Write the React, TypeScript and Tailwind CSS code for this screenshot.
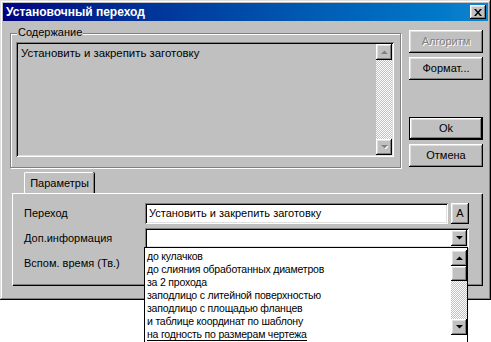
const raised =
  'shadow-[inset_-1px_-1px_#000,inset_1px_1px_#fff,inset_-2px_-2px_#808080,inset_2px_2px_#dfdfdf]'
const sunken =
  'shadow-[inset_1px_1px_#808080,inset_-1px_-1px_#fff,inset_2px_2px_#000,inset_-2px_-2px_#dfdfdf]'
const dither =
  'bg-[repeating-conic-gradient(#c0c0c0_0%_25%,#fff_0%_50%)] bg-[length:2px_2px]'

function Arrow({ dir, disabled }: { dir: 'up' | 'down'; disabled?: boolean }) {
  const pts = dir === 'up' ? '0,4 7,4 3.5,0.5' : '0,0 7,0 3.5,3.5'
  return (
    <svg width="7" height="4" viewBox="0 0 7 4" className="block">
      {disabled && (
        <polygon points={pts} fill="#fff" transform="translate(1,1)" />
      )}
      <polygon points={pts} fill={disabled ? '#808080' : '#000'} />
    </svg>
  )
}

function ScrollButton({ dir, disabled }: { dir: 'up' | 'down'; disabled?: boolean }) {
  return (
    <div className={`flex h-[16px] w-[16px] shrink-0 items-center justify-center bg-[#c0c0c0] ${raised}`}>
      <Arrow dir={dir} disabled={disabled} />
    </div>
  )
}

function Button({
  label,
  disabled,
  primary,
}: {
  label: string
  disabled?: boolean
  primary?: boolean
}) {
  return (
    <div className={clsxLite('h-[23px] w-[74px]', primary && 'border border-black')}>
      <div
        className={`flex h-full w-full items-center justify-center bg-[#c0c0c0] ${raised} ${
          disabled ? 'text-[#808080] [text-shadow:1px_1px_#fff]' : 'text-black'
        }`}
      >
        {label}
      </div>
    </div>
  )
}

function clsxLite(...parts: (string | false | undefined)[]) {
  return parts.filter(Boolean).join(' ')
}

const options = [
  'до кулачков',
  'до слияния обработанных диаметров',
  'за 2 прохода',
  'заподлицо с литейной поверхностью',
  'заподлицо с площадью фланцев',
  'и таблице координат по шаблону',
  'на годность по размерам чертежа',
]

export default function App() {
  return (
    <div className="relative h-[342px] w-[491px] overflow-hidden bg-white font-['Liberation_Sans',Arial,sans-serif] text-[11px] leading-none text-black">
      <div className="h-[300px] w-[491px] bg-[#c0c0c0] p-[3px] shadow-[inset_-1px_-1px_#000,inset_1px_1px_#dfdfdf,inset_-2px_-2px_#808080,inset_2px_2px_#fff]">
        {/* title bar */}
        <div className="flex h-[18px] items-center justify-between bg-gradient-to-r from-[#000080] to-[#1084d0] pl-[3px] pr-[2px]">
          <span className="text-[12px] font-bold text-white">Установочный переход</span>
          <div className={`flex h-[14px] w-[16px] items-center justify-center bg-[#c0c0c0] ${raised}`}>
            <svg width="8" height="7" viewBox="0 0 8 7">
              <path d="M0 0h2l2 2.5L6 0h2L5 3.5 8 7H6L4 4.5 2 7H0l3-3.5z" fill="#000" />
            </svg>
          </div>
        </div>

        {/* upper area */}
        <div className="flex">
          <div className="ml-[7px] mt-[12px] relative h-[135px] w-[391px] border border-[#808080] shadow-[inset_1px_1px_#fff,1px_1px_#fff]">
            <span className="absolute left-[6px] top-[-7px] bg-[#c0c0c0] px-[1px]">Содержание</span>
            <div className={`ml-[5px] mt-[8px] flex h-[115px] w-[378px] bg-[#c0c0c0] p-[2px] ${sunken}`}>
              <div className="flex-1 pl-[3px] pt-[4px] text-[11.4px]">Установить и закрепить заготовку</div>
              <div className="flex w-[16px] flex-col">
                <ScrollButton dir="up" disabled />
                <div className={`flex-1 ${dither}`} />
                <ScrollButton dir="down" disabled />
              </div>
            </div>
          </div>

          <div className="ml-[8px] mt-[9px] flex flex-col">
            <Button label="Алгоритм" disabled />
            <div className="mt-[4px]">
              <Button label="Формат..." />
            </div>
            <div className="mt-[37px]">
              <Button label="Ok" primary />
            </div>
            <div className="mt-[4px]">
              <Button label="Отмена" />
            </div>
          </div>
        </div>

        {/* tabs */}
        <div className="ml-[9px] mt-[4px] w-[470px]">
          <div className="ml-[12px] flex h-[21px] w-[70px] items-center justify-center rounded-t-[2px] border-l border-t border-white bg-[#c0c0c0] shadow-[inset_-1px_0_#808080,1px_0_#000]">
            Параметры
          </div>
          <div className="h-[92px] border-l border-t border-white shadow-[inset_-1px_-1px_#808080,1px_1px_#000]">
            <div className="flex items-center pt-[9px]">
              <span className="w-[132px] pl-[11px]">Переход</span>
              <div className={`flex h-[21px] w-[303px] items-center bg-white pl-[4px] ${sunken}`}>
                Установить и закрепить заготовку
              </div>
              <div className={`ml-[3px] flex h-[21px] w-[18px] items-center justify-center bg-[#c0c0c0] ${raised}`}>
                A
              </div>
            </div>
            <div className="mt-[4px] flex items-center">
              <span className="w-[132px] pl-[11px]">Доп.информация</span>
              <div className={`flex h-[20px] w-[324px] items-center justify-end bg-white p-[2px] ${sunken}`}>
                <ScrollButton dir="down" />
              </div>
            </div>
            <div className="mt-[10px] pl-[11px]">Вспом. время (Тв.)</div>
          </div>
        </div>
      </div>

      {/* dropdown list popup */}
      <div className="absolute left-[144px] top-[247px] flex h-[100px] w-[324px] border border-black bg-white">
        <div className="flex-1 pl-[2px] pt-[2px] text-[10.5px] tracking-[-0.2px]">
          {options.map((o, i) => (
            <div key={o} className="h-[13px] leading-[13px]">
              <span className={i === options.length - 1 ? 'border-b border-black' : ''}>{o}</span>
            </div>
          ))}
        </div>
        <div className="flex w-[16px] flex-col pt-[2px]">
          <ScrollButton dir="up" />
          <div className={`h-[15px] bg-[#c0c0c0] ${raised}`} />
          <div className={`h-[38px] ${dither}`} />
          <ScrollButton dir="down" />
        </div>
      </div>
    </div>
  )
}
